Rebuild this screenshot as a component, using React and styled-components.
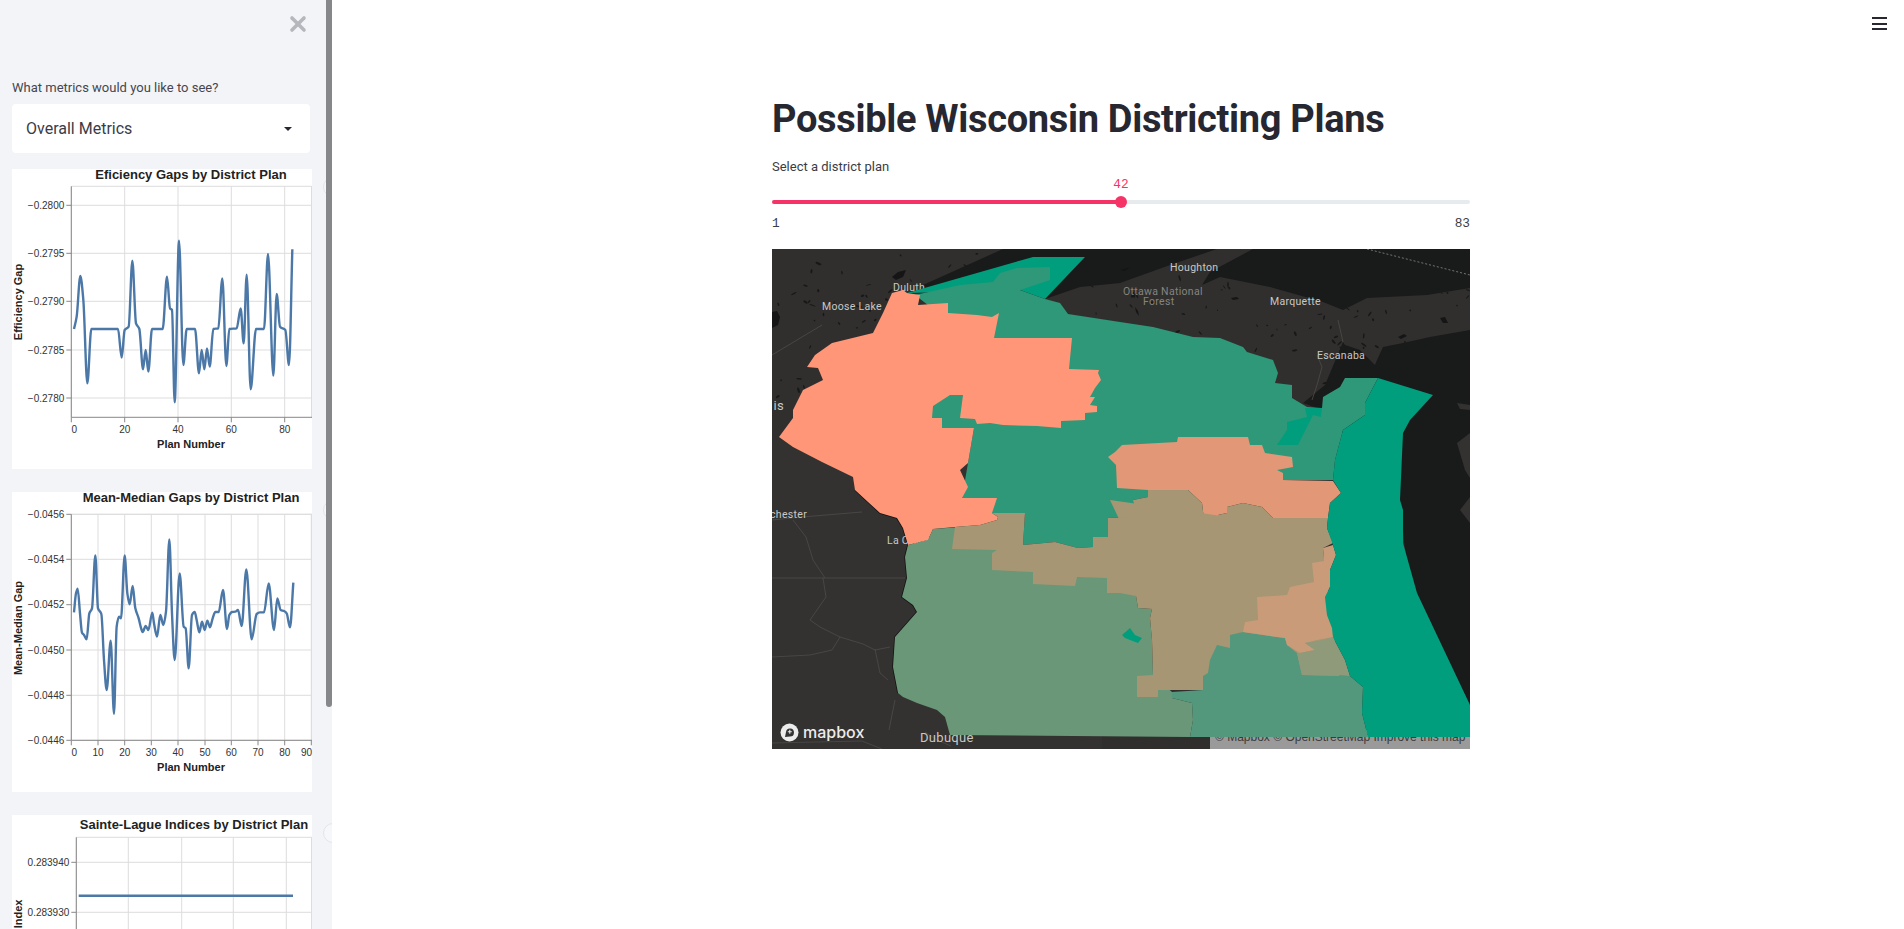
import styled, { createGlobalStyle } from "styled-components";
import { X } from "lucide-react";

const GlobalStyle = createGlobalStyle`
  html, body {
    margin: 0;
    height: 100%;
    overflow: hidden;
    background: #fff;
    font-family: Roboto, "Noto Sans", sans-serif;
    color: #262730;
  }
`;

// monotone cubic through the points, same as vega's interpolate: monotone
function monotonePath(pts) {
  const n = pts.length;
  const dx = [];
  const m = [];
  for (let i = 0; i < n - 1; i++) {
    dx[i] = pts[i + 1][0] - pts[i][0];
    m[i] = (pts[i + 1][1] - pts[i][1]) / dx[i];
  }
  const t = [m[0]];
  for (let i = 1; i < n - 1; i++) {
    t[i] = m[i - 1] * m[i] <= 0 ? 0 : (2 * m[i - 1] * m[i]) / (m[i - 1] + m[i]);
  }
  t[n - 1] = m[n - 2];
  let d = `M${pts[0][0]},${pts[0][1]}`;
  for (let i = 0; i < n - 1; i++) {
    const h = dx[i] / 3;
    d += `C${pts[i][0] + h},${pts[i][1] + t[i] * h} ${pts[i + 1][0] - h},${pts[i + 1][1] - t[i + 1] * h} ${pts[i + 1][0]},${pts[i + 1][1]}`;
  }
  return d;
}

// traces are read off the picture at 3x, [x, y] from the left of the sidebar
const efficiencyTrace = [
  [222,987],[230,950],[241,828],[250,900],[262,1150],[274,987],[290,987],[354,987],[365,1073],[374,990],[386,980],[397,782],[408,970],[418,987],
  [429,1108],[437,1050],[445,1115],[456,987],[488,987],[501,830],[510,925],[516,930],[524,1207],[537,722],[550,1095],[560,987],[585,987],[597,1120],
  [605,1050],[613,1108],[621,1045],[629,1100],[640,987],[655,985],[667,835],[679,1098],[688,987],[710,985],[722,925],[731,1030],[740,824],[752,1168],
  [768,987],[792,987],[804,762],[820,1127],[830,882],[840,980],[856,990],[867,1095],[877,748],
];

const meanMedianTrace = [
  [222,397],[228,340],[233,326],[240,400],[246,458],[252,465],[260,478],[268,400],[276,385],[286,226],[294,385],[304,402],[312,540],[320,630],[332,482],
  [342,702],[350,440],[357,410],[363,415],[374,226],[382,340],[389,373],[398,318],[406,385],[416,415],[422,440],[428,456],[437,438],[445,450],[457,398],
  [462,430],[471,470],[481,405],[490,435],[498,395],[508,178],[516,400],[524,540],[539,280],[551,440],[557,445],[566,565],[576,405],[584,396],[590,420],
  [598,457],[606,425],[614,450],[622,422],[630,442],[638,415],[646,396],[656,396],[669,330],[681,447],[688,405],[696,396],[706,395],[714,390],[725,438],
  [739,268],[755,478],[770,402],[780,397],[792,397],[806,310],[822,450],[832,355],[842,390],[852,393],[860,400],[870,442],[880,308],
];

const charts = [
  {
    title: "Eficiency Gaps by District Plan",
    titleX: 179,
    titleY: 10,
    yTitle: "Efficiency Gap",
    yTitleY: 133,
    axisX: 59.3,
    axisTop: 17.3,
    xTicks: [[59.3,"0"],[112.7,"20"],[166,"40"],[219.3,"60"],[272.7,"80"]],
    yTicks: [[36.3,"−0.2800"],[84.3,"−0.2795"],[132.3,"−0.2790"],[181,"−0.2785"],[229,"−0.2780"]],
    trace: efficiencyTrace.map(([x, y]) => [(x - 36) / 3, (y - 507) / 3]),
  },
  {
    title: "Mean-Median Gaps by District Plan",
    titleX: 179,
    titleY: 10,
    yTitle: "Mean-Median Gap",
    yTitleY: 136,
    axisX: 59.3,
    axisTop: 22.3,
    xTicks: [[59.3,"0"],[86,"10"],[112.7,"20"],[139.3,"30"],[166,"40"],[193,"50"],[219.3,"60"],[246,"70"],[272.7,"80"],[299.3,"90"]],
    yTicks: [[22.3,"−0.0456"],[67.3,"−0.0454"],[112.7,"−0.0452"],[158,"−0.0450"],[203.3,"−0.0448"],[248.3,"−0.0446"]],
    trace: meanMedianTrace.map(([x, y]) => [(x - 36) / 3, (y - 36) / 3]),
  },
  {
    title: "Sainte-Lague Indices by District Plan",
    titleX: 182,
    titleY: 14,
    yTitle: "Sainte-Lague Index",
    yTitleY: 135,
    axisX: 64.3,
    axisTop: 22.3,
    xTicks: [[64.3,"0"],[116.3,"20"],[169.7,"40"],[221.3,"60"],[274.3,"80"]],
    yTicks: [[47.3,"0.283940"],[97.3,"0.283930"],[147.3,"0.283920"],[197.3,"0.283910"]],
    trace: [[66.7,80.7],[281,80.7]],
  },
];

function Chart({ title, titleX, titleY, yTitle, yTitleY, axisX, axisTop, xTicks, yTicks, trace }) {
  const axisBottom = 248.3;
  return (
    <ChartCard>
      <svg width="300" height="300" viewBox="0 0 300 300">
        {xTicks.map(([x]) => (
          <GridLine key={x} x1={x} x2={x} y1={axisTop} y2={axisBottom} />
        ))}
        {yTicks.map(([y]) => (
          <GridLine key={y} x1={axisX} x2={300} y1={y} y2={y} />
        ))}
        <GridLine x1={299.5} x2={299.5} y1={axisTop} y2={axisBottom} />
        <GridLine x1={axisX} x2={300} y1={axisTop} y2={axisTop} />
        <AxisLine x1={axisX} x2={axisX} y1={axisTop} y2={axisBottom} />
        <AxisLine x1={axisX} x2={300} y1={axisBottom} y2={axisBottom} />
        {yTicks.map(([y, label]) => (
          <g key={label}>
            <AxisLine x1={axisX - 5} x2={axisX} y1={y} y2={y} />
            <TickLabel x={axisX - 7} y={y + 3.5} textAnchor="end">{label}</TickLabel>
          </g>
        ))}
        {xTicks.map(([x, label]) => (
          <g key={label}>
            <AxisLine x1={x} x2={x} y1={axisBottom} y2={axisBottom + 5} />
            <TickLabel
              x={label === "0" ? x + 3 : label === "90" ? 300 : x}
              y={264}
              textAnchor={label === "90" ? "end" : "middle"}
            >
              {label}
            </TickLabel>
          </g>
        ))}
        <Trace d={monotonePath(trace)} />
        <ChartTitle x={titleX} y={titleY} textAnchor="middle">{title}</ChartTitle>
        <AxisTitle x={179} y={279} textAnchor="middle">Plan Number</AxisTitle>
        <AxisTitle transform={`translate(10 ${yTitleY}) rotate(-90)`} textAnchor="middle">{yTitle}</AxisTitle>
      </svg>
      <FullscreenButton />
    </ChartCard>
  );
}

const lakes = [
  "M772 312l5-1 3 6-2 8-6 3z", "M892 277l6-5 8-2-3 7-7 3z", "M1135 307l3 4 1 5-3-4z", "M1231 298l6-1 2 2-6 1z",
  "M1440 318l5-1 3 6-5 0z", "M1398 337l6-3 3 2-6 3z", "M1120 270l10-3-5 4z",
];

// small dark ponds on the northern land, a fixed sequence so the map stays put
const ponds = (() => {
  let seed = 17;
  const next = () => {
    seed = (seed * 1103515245 + 12345) % 2147483648;
    return seed / 2147483648;
  };
  const out = [];
  for (let i = 0; i < 260; i++) {
    out.push({
      cx: 772 + next() * 698,
      cy: 249 + next() * 150,
      rx: 0.8 + next() * 2.6,
      ry: 0.4 + next() * 0.8,
      rot: next() * 180,
    });
  }
  return out;
})();

const rivers = [
  "M772 578L905 578", "M810 620l10 7 20 10 23 7 12 6 15-3", "M840 637l-8 13-22 5-38 2",
  "M875 649l5 24 8 7", "M823 578l3 19-16 23", "M793 520l13 17 7 23 12 18", "M772 520l30-3 60-5",
  "M1317 355l5 12-5 18-5 15", "M1338 320l5 22", "M925 732l12 8 14 6", "M895 700l-6 30",
  "M772 743l90-2 20 8", "M1040 300l5 40", "M772 355l50-30",
];

// district colours come straight off the deck.gl layer
const districts = [
  ["#009e7c", "907,293 1033,257 1085,257 1045,299 1020,290"],
  ["#2e9878", "915,295 960,285 993,282 1000,273 1017,268 1050,267 1050,280 1020,290 1045,299 1060,303 1068,314 1120,322 1153,327 1193,337 1220,338 1243,347 1247,352 1273,360 1278,373 1275,383 1292,385 1292,398 1307,407 1322,408 1323,397 1340,387 1345,378 1378,378 1365,403 1365,415 1343,430 1335,460 1333,480 1283,480 1150,490 1148,497 1133,500 1135,517 1108,518 1108,537 1093,537 1093,547 1078,548 1055,542 1023,545 1025,513 992,513 962,498 968,463 974,428 930,430 930,395 960,330"],
  ["#009e7c", "1305,408 1322,408 1321,417 1313,415 1298,445 1277,445 1287,430 1287,422 1307,417"],
  ["#ff9677", "903,290 907,293 920,295 918,305 948,303 948,313 977,315 992,317 999,313 994,338 1072,338 1069,369 1099,370 1098,373 1101,380 1095,388 1090,397 1095,397 1090,405 1097,406 1097,412 1085,413 1085,420 1061,421 1061,428 1037,426 1003,425 990,423 977,424 975,419 960,418 963,395 950,395 933,406 932,418 942,418 942,428 974,428 968,463 960,470 968,487 962,498 997,498 992,513 998,517 997,520 980,525 955,527 933,529 928,540 908,545 903,528 897,518 880,513 868,502 855,490 853,477 822,462 793,447 779,437 793,418 793,410 803,390 823,380 818,368 807,367 815,355 832,343 873,333 883,313 892,293"],
  ["#e29777", "1108,457 1115,452 1122,445 1177,442 1178,437 1248,437 1250,445 1262,445 1265,453 1292,457 1293,467 1277,470 1283,473 1283,480 1333,481 1341,493 1330,503 1328,518 1273,518 1262,507 1243,503 1227,507 1227,513 1218,515 1218,528 1205,528 1202,503 1188,490 1148,490 1117,488 1116,465"],
  // filler under the southern districts so no land shows through where they meet
  ["#a69673", "1110,500 1320,530 1340,680 1200,690"],
  ["#6b9779", "933,529 990,525 1000,545 1120,560 1136,596 1138,608 1152,609 1150,618 1152,640 1153,675 1172,692 1172,698 1192,703 1193,720 1190,737 950,735 945,717 937,710 917,703 903,697 898,693 893,667 895,637 917,612 913,605 902,597 907,578 905,557 908,545 928,540"],
  ["#a69673", "1148,490 1188,490 1202,503 1205,528 1218,528 1218,515 1227,513 1227,507 1243,503 1262,507 1273,518 1328,518 1327,528 1333,543 1323,548 1324,561 1312,563 1314,582 1290,587 1287,595 1257,597 1258,620 1245,622 1243,632 1230,635 1230,648 1217,645 1210,660 1208,673 1203,676 1203,690 1158,690 1158,697 1137,697 1137,676 1153,675 1152,640 1150,618 1152,609 1138,608 1136,596 1120,593 1107,593 1107,578 1077,577 1075,586 1033,584 1033,572 992,570 992,553 997,550 952,549 955,527 980,525 997,520 998,517 992,513 1025,513 1023,545 1055,542 1078,548 1093,547 1093,537 1108,537 1108,518 1135,517 1133,500 1148,497"],
  ["#53987c", "1230,635 1243,632 1277,637 1285,638 1287,645 1297,653 1302,675 1350,676 1363,687 1362,713 1368,737 1190,737 1193,720 1192,703 1172,698 1172,692 1203,690 1203,676 1208,673 1210,660 1217,645 1230,648"],
  ["#c99b79", "1323,548 1333,545 1336,555 1330,570 1330,587 1325,597 1327,615 1332,628 1333,637 1317,640 1305,643 1315,650 1300,653 1287,645 1285,638 1277,637 1243,632 1245,622 1258,620 1257,597 1287,595 1290,587 1314,582 1312,563 1324,561"],
  ["#8f9a7a", "1305,643 1323,640 1333,637 1336,643 1345,660 1350,676 1302,675 1297,653 1300,653 1315,650"],
  ["#009e7c", "1378,378 1433,395 1410,420 1403,433 1400,500 1403,510 1403,543 1417,593 1470,705 1470,737 1368,737 1362,713 1363,687 1350,676 1345,660 1336,643 1333,637 1332,628 1327,615 1325,597 1330,587 1330,570 1336,555 1333,545 1327,528 1328,518 1330,503 1341,493 1333,480 1335,460 1343,430 1365,415 1365,403"],
  ["#009e7c", "1122,635 1130,628 1135,635 1142,638 1138,643 1130,640 1125,638"],
];

function DistrictMap() {
  return (
    <MapFrame>
      <MapLayer viewBox="772 249 698 500">
        <rect x="772" y="249" width="698" height="500" fill="#302f2e" />
        <rect x="772" y="440" width="330" height="309" fill="#343231" />
        {ponds.map((p, i) => (
          <ellipse key={i} cx={p.cx} cy={p.cy} rx={p.rx} ry={p.ry} transform={`rotate(${p.rot} ${p.cx} ${p.cy})`} fill="#181818" />
        ))}
        <polygon fill="#191a1a" points="923,285 1003,249 1217,249 1170,265 1120,283 1080,287 1045,299 1000,310 930,300" />
        <polygon fill="#191a1a" points="1253,249 1470,249 1470,288 1427,295 1367,298 1343,310 1323,302 1270,287 1220,277 1202,285 1210,272" />
        <polygon fill="#191a1a" points="1470,330 1430,337 1403,343 1383,347 1377,360 1375,365 1360,350 1345,345 1343,342 1325,385 1303,403 1322,410 1400,500 1420,700 1470,740" />
        <polygon fill="#333231" points="1470,433 1457,443 1465,470 1470,478" />
        <polygon fill="#333231" points="1470,497 1460,510 1470,523" />
        <polygon fill="#333231" points="1457,403 1470,405 1470,410 1460,409" />
        {lakes.map((d) => (
          <path key={d} d={d} fill="#151515" />
        ))}
        {rivers.map((d) => (
          <path key={d} d={d} fill="none" stroke="#4c4b49" strokeWidth="0.8" />
        ))}
        <path d="M1367 249L1470 275" stroke="#8a8a8a" strokeWidth="0.8" strokeDasharray="2 2" />
        <path d="M855 490l13 12 12 11 17 5 6 10 5 17-3 12 2 21-5 19 11 8 4 7-22 25-2 30 5 26" fill="none" stroke="#141414" strokeWidth="1.6" />
        <MapLabel x="822" y="310">Moose Lake</MapLabel>
        <MapLabel x="893" y="291">Duluth</MapLabel>
        <MapLabel x="1170" y="271">Houghton</MapLabel>
        <MapLabel x="1123" y="295" $dim>Ottawa National</MapLabel>
        <MapLabel x="1143" y="305" $dim>Forest</MapLabel>
        <MapLabel x="1270" y="305">Marquette</MapLabel>
        <MapLabel x="1317" y="359">Escanaba</MapLabel>
        <MapLabel x="784" y="410" textAnchor="end" $large>Wausau is</MapLabel>
        <MapLabel x="807" y="518" textAnchor="end">Rochester</MapLabel>
        <MapLabel x="887" y="544">La Crosse</MapLabel>
        <MapLabel x="920" y="742" $large>Dubuque</MapLabel>
      </MapLayer>
      <MapboxLogo>
        <svg width="19" height="19" viewBox="0 0 19 19">
          <circle cx="9.5" cy="9.5" r="9" fill="#ececec" />
          <path d="M5 14l1-5a4 4 0 1 1 4 4.5z" fill="#333" />
          <path d="M9.8 6.8v4M7.8 8.8h4" stroke="#ececec" strokeWidth="1.1" />
        </svg>
        <span>mapbox</span>
      </MapboxLogo>
      <Attribution>© Mapbox © OpenStreetMap Improve this map</Attribution>
      <DistrictLayer viewBox="772 249 698 500">
        {districts.map(([fill, points]) => (
          <polygon key={points} fill={fill} points={points} />
        ))}
      </DistrictLayer>
    </MapFrame>
  );
}

export default function App() {
  return (
    <>
      <GlobalStyle />
      <Page>
        <Sidebar>
          <CloseRow>
            <X size={24} strokeWidth={3.6} color="#b5b7bd" />
          </CloseRow>
          <FieldLabel>What metrics would you like to see?</FieldLabel>
          <SelectBox>
            <span>Overall Metrics</span>
            <Caret />
          </SelectBox>
          <ChartStack>
            {charts.map((chart) => (
              <Chart key={chart.title} {...chart} />
            ))}
          </ChartStack>
          <ScrollThumb />
        </Sidebar>
        <Main>
          <Content>
            <Title>Possible Wisconsin Districting Plans</Title>
            <SliderLabel>Select a district plan</SliderLabel>
            <SliderValue>42</SliderValue>
            <SliderTrack>
              <SliderFill style={{ width: `${((42 - 1) / 82) * 100}%` }}>
                <SliderThumb />
              </SliderFill>
            </SliderTrack>
            <SliderEnds>
              <span>1</span>
              <span>83</span>
            </SliderEnds>
            <DistrictMap />
          </Content>
        </Main>
        <Hamburger>
          <span />
          <span />
          <span />
        </Hamburger>
      </Page>
    </>
  );
}

const Page = styled.div`
  display: flex;
  height: 100vh;
  overflow: hidden;
`;

const Sidebar = styled.aside`
  position: relative;
  flex: 0 0 332px;
  height: 100%;
  box-sizing: border-box;
  padding: 0 20px 0 12px;
  background: #f3f4f8;
  overflow: hidden;
`;

const CloseRow = styled.div`
  display: flex;
  justify-content: flex-end;
  height: 79px;
  padding: 12px 2px 0 0;
  box-sizing: border-box;
`;

const FieldLabel = styled.div`
  height: 25px;
  font-size: 13px;
  line-height: 18px;
  color: #45464f;
`;

const SelectBox = styled.div`
  display: flex;
  align-items: center;
  justify-content: space-between;
  width: 298px;
  height: 49px;
  box-sizing: border-box;
  padding: 0 18px 0 14px;
  background: #fff;
  border-radius: 4px;
  font-size: 16px;
  color: #3b3c46;
`;

const Caret = styled.i`
  width: 0;
  height: 0;
  border-left: 4px solid transparent;
  border-right: 4px solid transparent;
  border-top: 4px solid #262730;
`;

const ChartStack = styled.div`
  display: flex;
  flex-direction: column;
  gap: 23px;
  margin-top: 16px;
`;

const ChartCard = styled.div`
  position: relative;
  width: 300px;
  height: 300px;
  background: #fff;
  svg {
    display: block;
    overflow: visible;
  }
`;

const FullscreenButton = styled.div`
  position: absolute;
  top: 8px;
  left: 311px;
  width: 18px;
  height: 18px;
  border-radius: 50%;
  border: 1px solid #e3e5ea;
  background: #f6f7fa;
`;

const GridLine = styled.line`
  stroke: #ddd;
  stroke-width: 1;
`;

const AxisLine = styled.line`
  stroke: #888;
  stroke-width: 1;
`;

const TickLabel = styled.text`
  font: 10px "Liberation Sans", Arial, sans-serif;
  fill: #333;
`;

const ChartTitle = styled.text`
  font: bold 13px "Liberation Sans", Arial, sans-serif;
  fill: #222;
`;

const AxisTitle = styled.text`
  font: bold 11px "Liberation Sans", Arial, sans-serif;
  fill: #222;
`;

const Trace = styled.path`
  fill: none;
  stroke: #4c78a8;
  stroke-width: 2.4;
`;

const ScrollThumb = styled.div`
  position: absolute;
  top: 0;
  right: 0;
  width: 6px;
  height: 707px;
  background: #86878b;
  border-radius: 0 0 3px 3px;
`;

const Main = styled.main`
  flex: 1;
  display: flex;
  justify-content: center;
  padding-left: 6px;
`;

const Content = styled.div`
  width: 698px;
  padding-top: 91px;
`;

const Title = styled.h1`
  margin: 0;
  height: 56px;
  font-size: 38px;
  line-height: 56px;
  font-weight: 700;
  letter-spacing: -0.32px;
  color: #262730;
  white-space: nowrap;
`;

const SliderLabel = styled.div`
  margin-top: 11px;
  font-size: 13px;
  line-height: 18px;
  color: #3b3c46;
`;

const SliderValue = styled.div`
  margin-top: 1px;
  text-align: center;
  font-family: "Liberation Mono", monospace;
  font-size: 12.8px;
  line-height: 16px;
  color: #f63366;
`;

const SliderTrack = styled.div`
  margin-top: 7px;
  height: 4px;
  border-radius: 2px;
  background: #e8ebee;
`;

const SliderFill = styled.div`
  position: relative;
  height: 100%;
  border-radius: 2px;
  background: #f63366;
`;

const SliderThumb = styled.div`
  position: absolute;
  right: -6px;
  top: -4px;
  width: 12px;
  height: 12px;
  border-radius: 50%;
  background: #f63366;
`;

const SliderEnds = styled.div`
  display: flex;
  justify-content: space-between;
  margin-top: 12px;
  font-family: "Liberation Mono", monospace;
  font-size: 12.8px;
  line-height: 16px;
  color: #3b3c46;
`;

const MapFrame = styled.div`
  position: relative;
  width: 698px;
  height: 500px;
  margin-top: 17px;
  overflow: hidden;
`;

const MapLayer = styled.svg`
  display: block;
  width: 698px;
  height: 500px;
`;

const DistrictLayer = styled.svg`
  position: absolute;
  inset: 0;
  width: 698px;
  height: 500px;
`;

const MapLabel = styled.text`
  font-family: Roboto, sans-serif;
  font-size: ${(p) => (p.$large ? "13px" : "10.5px")};
  letter-spacing: 0.3px;
  fill: ${(p) => (p.$dim ? "#85847f" : "#c9c8c5")};
`;

const MapboxLogo = styled.div`
  position: absolute;
  left: 8px;
  bottom: 7px;
  display: flex;
  align-items: center;
  gap: 4px;
  font-family: Inter, sans-serif;
  font-weight: 500;
  font-size: 16px;
  line-height: 19px;
  color: #ececec;
`;

const Attribution = styled.div`
  position: absolute;
  right: 0;
  bottom: 0;
  width: 260px;
  height: 19px;
  box-sizing: border-box;
  padding: 0 5px;
  background: #9b9a9a;
  font-family: "Liberation Sans", Arial, sans-serif;
  font-size: 12px;
  line-height: 14px;
  text-align: right;
  white-space: nowrap;
  color: #3a3a3a;
`;

const Hamburger = styled.div`
  position: absolute;
  top: 17px;
  right: 17px;
  display: flex;
  flex-direction: column;
  gap: 3.5px;
  width: 15px;
  span {
    height: 2px;
    background: #262730;
  }
`;
